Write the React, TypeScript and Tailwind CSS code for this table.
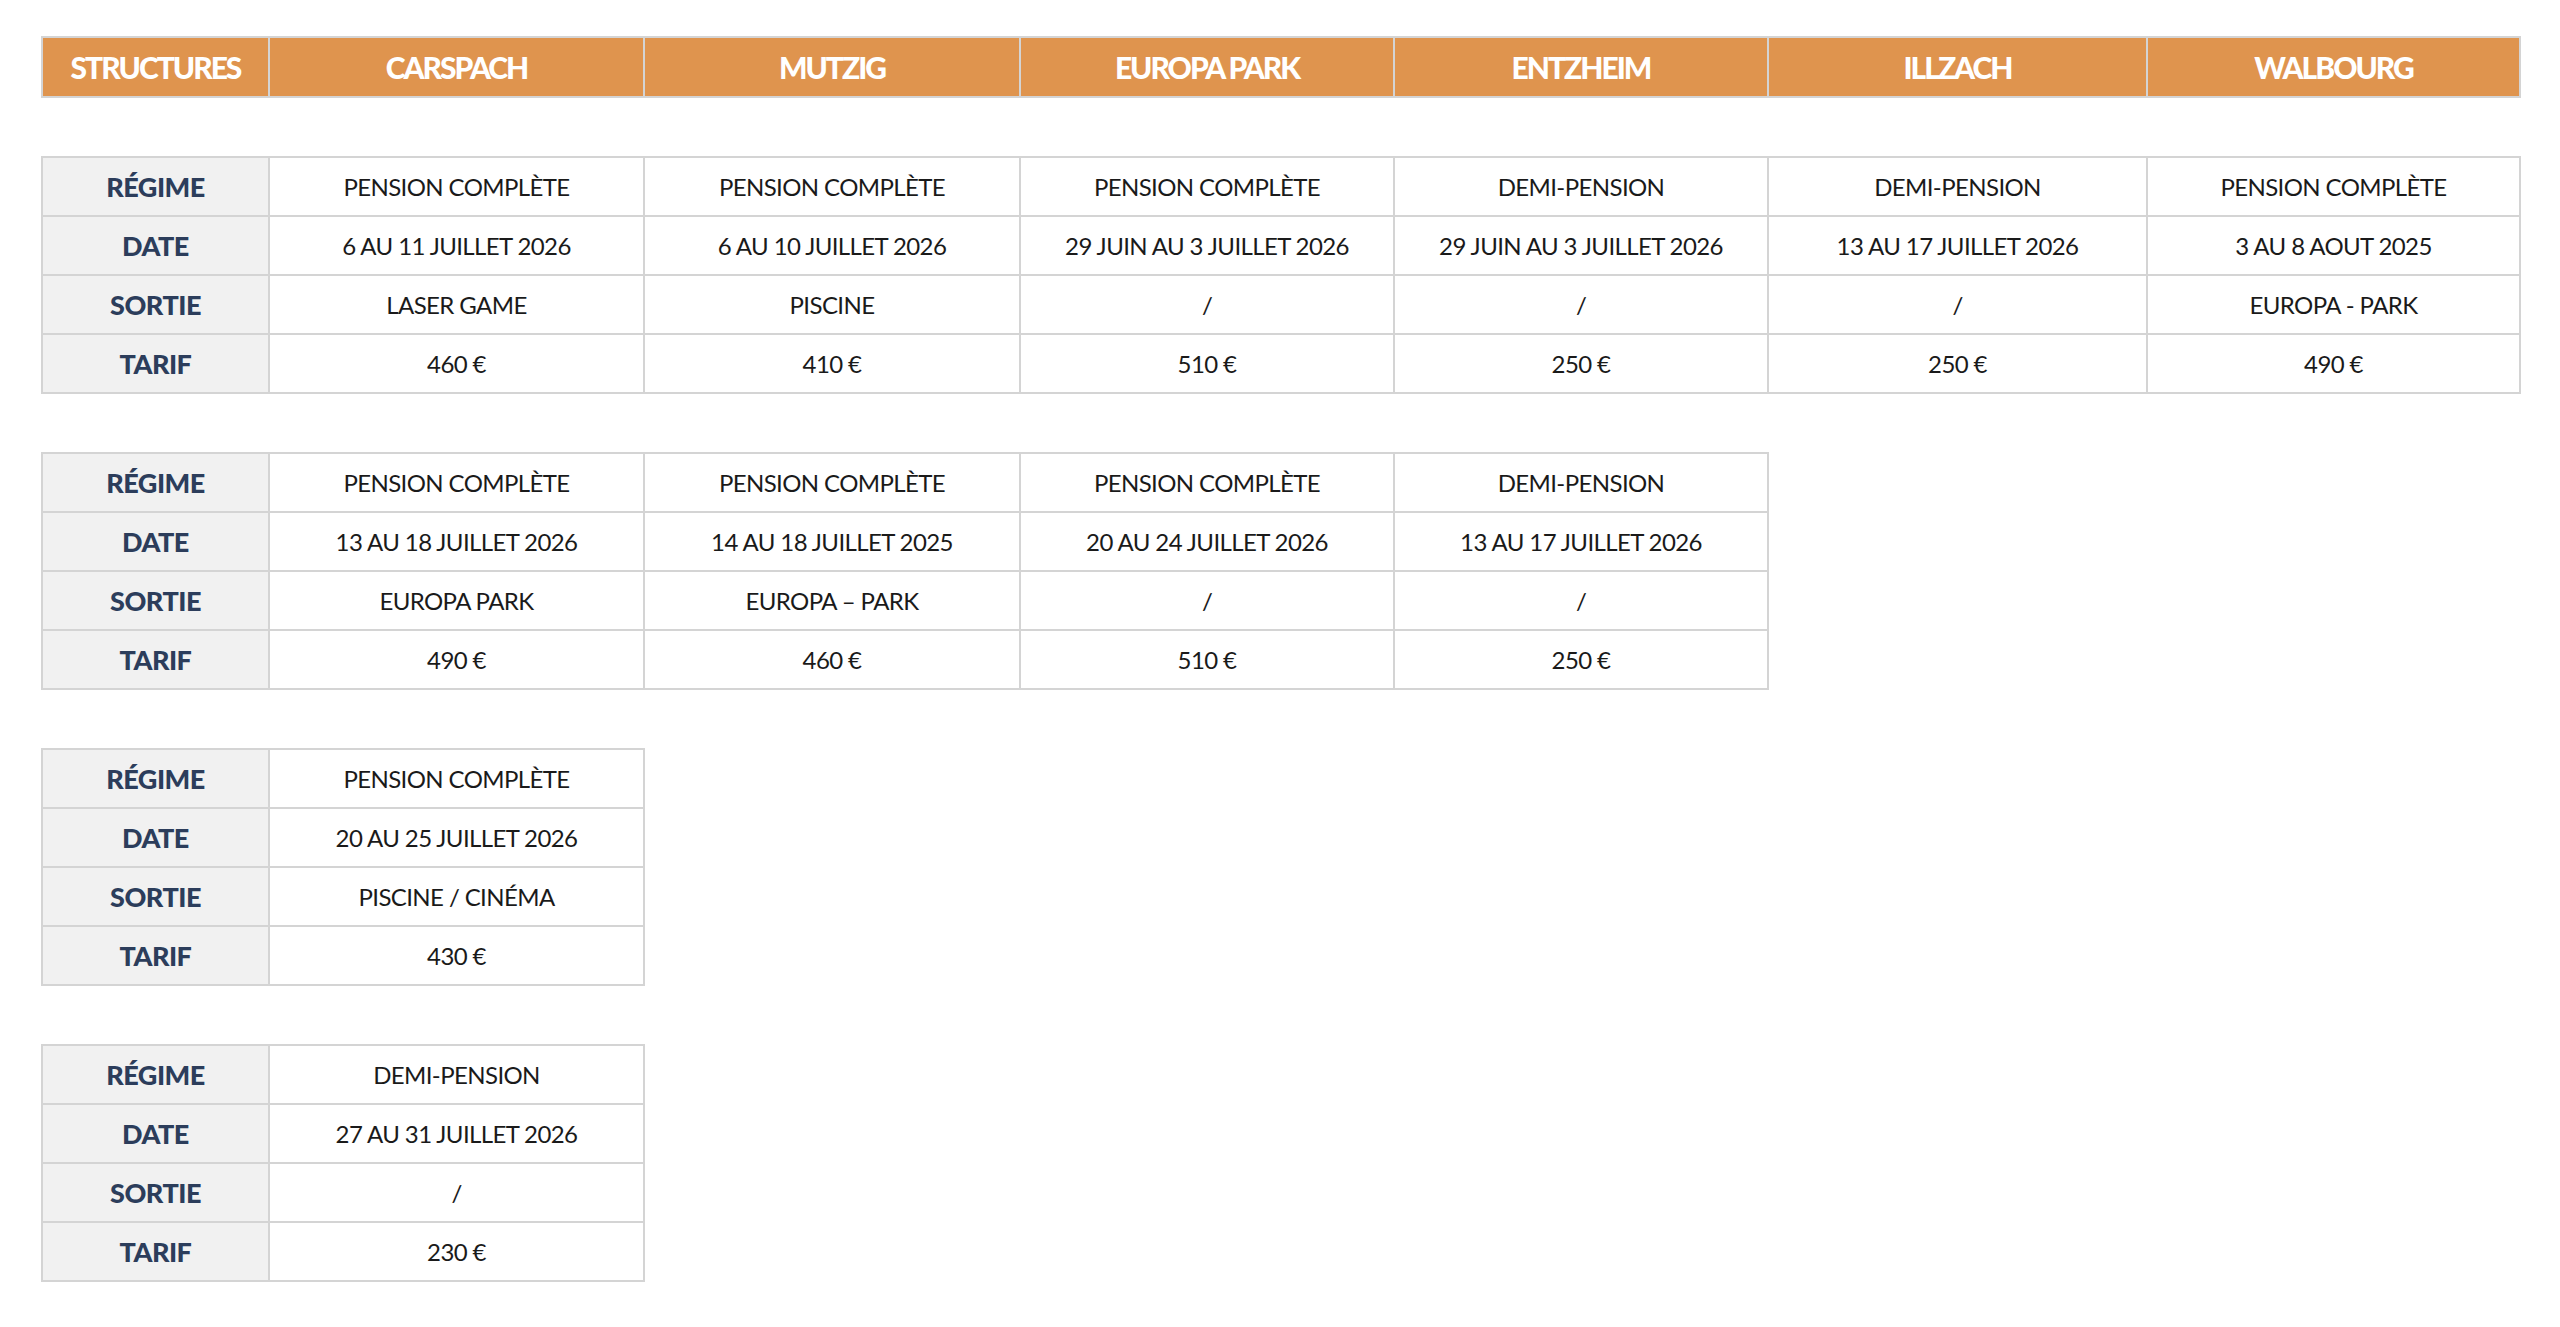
import React from "react"

const headers = ["STRUCTURES", "CARSPACH", "MUTZIG", "EUROPA PARK", "ENTZHEIM", "ILLZACH", "WALBOURG"]
const labels = ["RÉGIME", "DATE", "SORTIE", "TARIF"]

const cols7 = "grid-cols-[227px_375px_376px_374px_374px_379px_373px]"
const cols5 = "grid-cols-[227px_375px_376px_374px_374px]"
const cols2 = "grid-cols-[227px_375px]"

const blocks: { cols: string; rows: string[][] }[] = [
  {
    cols: cols7,
    rows: [
      ["PENSION COMPLÈTE", "PENSION COMPLÈTE", "PENSION COMPLÈTE", "DEMI-PENSION", "DEMI-PENSION", "PENSION COMPLÈTE"],
      ["6 AU 11 JUILLET 2026", "6 AU 10 JUILLET 2026", "29 JUIN AU 3 JUILLET 2026", "29 JUIN AU 3 JUILLET 2026", "13 AU 17 JUILLET 2026", "3 AU 8 AOUT 2025"],
      ["LASER GAME", "PISCINE", "/", "/", "/", "EUROPA - PARK"],
      ["460 €", "410 €", "510 €", "250 €", "250 €", "490 €"],
    ],
  },
  {
    cols: cols5,
    rows: [
      ["PENSION COMPLÈTE", "PENSION COMPLÈTE", "PENSION COMPLÈTE", "DEMI-PENSION"],
      ["13 AU 18 JUILLET 2026", "14 AU 18 JUILLET 2025", "20 AU 24 JUILLET 2026", "13 AU 17 JUILLET 2026"],
      ["EUROPA PARK", "EUROPA – PARK", "/", "/"],
      ["490 €", "460 €", "510 €", "250 €"],
    ],
  },
  { cols: cols2, rows: [["PENSION COMPLÈTE"], ["20 AU 25 JUILLET 2026"], ["PISCINE / CINÉMA"], ["430 €"]] },
  { cols: cols2, rows: [["DEMI-PENSION"], ["27 AU 31 JUILLET 2026"], ["/"], ["230 €"]] },
]

export default function App() {
  return (
    <div className="min-h-screen bg-white pl-[41px] pt-[36px] pb-10 font-['Lato','Noto_Sans',sans-serif]">
      <div className="flex flex-col items-start gap-[58px]">
        {/* Header */}
        <div className={`grid ${cols7} border-t-2 border-l-2 border-[#d4d4d4]`}>
          {headers.map((h, i) => (
            <div
              key={i}
              className="flex h-[60px] items-center justify-center border-r-2 border-b-2 border-[#d4d4d4] bg-[#df944e] text-[30px] font-black leading-none tracking-[-2px] text-white"
            >
              {h}
            </div>
          ))}
        </div>

        {blocks.map((block, b) => (
          <div key={b} className={`grid ${block.cols} border-t-2 border-l-2 border-[#d4d4d4]`}>
            {block.rows.map((cells, r) => (
              <React.Fragment key={r}>
                <div className="flex h-[59px] items-center justify-center border-r-2 border-b-2 border-[#d4d4d4] bg-[#f1f1f1] text-[27px] font-black leading-none tracking-[-0.5px] text-[#2c3d5b]">
                  {labels[r]}
                </div>
                {cells.map((c, i) => (
                  <div
                    key={i}
                    className="flex h-[59px] items-center justify-center whitespace-nowrap border-r-2 border-b-2 border-[#d4d4d4] bg-white text-[24px] leading-none tracking-[-0.6px] text-[#1a1a1a]"
                  >
                    {c}
                  </div>
                ))}
              </React.Fragment>
            ))}
          </div>
        ))}
      </div>
    </div>
  )
}
